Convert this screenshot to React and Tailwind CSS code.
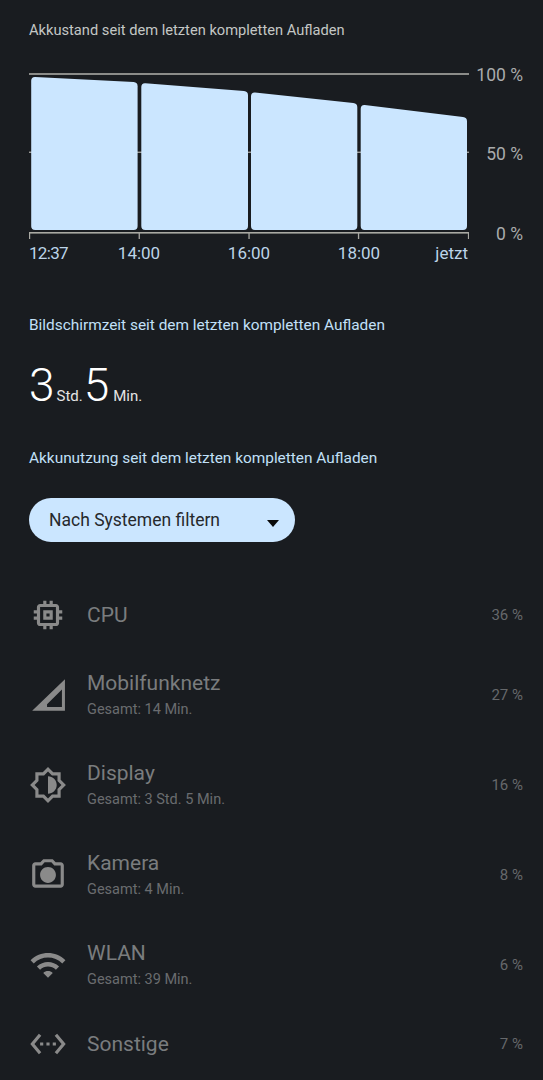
import React from "react";

const font = { fontFamily: '"Roboto", "Liberation Sans", sans-serif' };

const icons = {
  cpu: "M15 9H9v6h6V9zm-2 4h-2v-2h2v2zm8-2V9h-2V7c0-1.1-.9-2-2-2h-2V3h-2v2h-2V3H9v2H7c-1.1 0-2 .9-2 2v2H3v2h2v2H3v2h2v2c0 1.1.9 2 2 2h2v2h2v-2h2v2h2v-2h2c1.1 0 2-.9 2-2v-2h2v-2h-2v-2h2zm-4 6H7V7h10v10z",
  cell: "M2 22h20.7V2L2 22zm9.4-2.4h9.4V8.5L11.4 17.9z",
  display: "M20 15.31L23.31 12 20 8.69V4h-4.69L12 .69 8.69 4H4v4.69L.69 12 4 15.31V20h4.69L12 23.31 15.31 20H20v-4.69zM18 14.48V18h-3.52L12 20.48 9.52 18H6v-3.52L3.52 12 6 9.52V6h3.52L12 3.52 14.48 6H18v3.52L20.48 12 18 14.48zM12 6.5v11c3.03 0 5.5-2.47 5.5-5.5S15.03 6.5 12 6.5z",
  camera: "M20 4h-3.17L15 2H9L7.17 4H4c-1.1 0-2 .9-2 2v12c0 1.1.9 2 2 2h16c1.1 0 2-.9 2-2V6c0-1.1-.9-2-2-2zm0 14H4V6h4.05l1.83-2h4.24l1.83 2H20v12zM12 7c-2.76 0-5 2.24-5 5s2.24 5 5 5 5-2.24 5-5-2.24-5-5-5z",
  wifi: "M1 9l2 2c4.97-4.97 13.03-4.97 18 0l2-2C16.93 2.93 7.08 2.93 1 9zm8 8l3 3 3-3c-1.65-1.66-4.34-1.66-6 0zm-4-4l2 2c2.76-2.76 7.24-2.76 10 0l2-2C15.14 9.14 8.87 9.14 5 13z",
  other: "M7.77 6.76L6.23 5.48.82 12l5.41 6.52 1.54-1.28L3.42 12l4.35-5.24zM7 13h2v-2H7v2zm10-2h-2v2h2v-2zm-6 2h2v-2h-2v2zm6.77-7.52l-1.54 1.28L20.58 12l-4.35 5.24 1.54 1.28L23.18 12l-5.41-6.52z",
};

const rows = [
  { icon: "cpu", title: "CPU", pct: "36 %", h: "h-[70px]" },
  { icon: "cell", title: "Mobilfunknetz", sub: "Gesamt: 14 Min.", pct: "27 %", h: "h-[90px]" },
  { icon: "display", title: "Display", sub: "Gesamt: 3 Std. 5 Min.", pct: "16 %", h: "h-[90px]" },
  { icon: "camera", title: "Kamera", sub: "Gesamt: 4 Min.", pct: "8 %", h: "h-[90px]" },
  { icon: "wifi", title: "WLAN", sub: "Gesamt: 39 Min.", pct: "6 %", h: "h-[90px]" },
  { icon: "other", title: "Sonstige", pct: "7 %", h: "h-[68px]" },
];

function bar(x0, x1, yl, yr) {
  const b = 156;
  const r = 4;
  return `M${x0} ${yl + r}Q${x0} ${yl} ${x0 + r} ${yl + 0.2}L${x1 - r} ${yr - 0.3}Q${x1} ${yr} ${x1} ${yr + r}L${x1} ${b - r}Q${x1} ${b} ${x1 - r} ${b}L${x0 + r} ${b}Q${x0} ${b} ${x0} ${b - r}Z`;
}

function Chart() {
  const line = "#a9a9a3";
  const bars = [
    [2.2, 108.6, 2.7, 8.3],
    [112.3, 219, 9, 17.3],
    [222, 328.3, 18.3, 29.3],
    [331.7, 438, 30.7, 43.3],
  ];
  return (
    <svg width="440" height="167" viewBox="0 -1 440 167" className="block shrink-0">
      <rect x="0" y="-0.8" width="440" height="1.6" fill={line} />
      <rect x="0" y="158" width="440" height="1.6" fill={line} />
      {[0.5, 110.2, 220, 329.5, 439.5].map((x) => (
        <rect key={x} x={x - 0.6} y="158" width="1.3" height="7" fill={line} />
      ))}
      <rect x="0" y="77.6" width="440" height="1.3" fill={line} />
      {bars.map((b) => (
        <path key={b[0]} d={bar(b[0], b[1], b[2], b[3])} fill="#cbe6ff" />
      ))}
    </svg>
  );
}

function Row({ icon, title, sub, pct, h }) {
  return (
    <div className={`flex items-center ${h}`}>
      <div className="w-[38px] h-[38px] shrink-0">
        <svg width="38" height="38" viewBox="0 0 24 24" fill="#8a8a8a" fillRule="evenodd">
          <path d={icons[icon]} />
        </svg>
      </div>
      <div className="ml-[20px] flex-1 min-w-0">
        <div className="text-[21px] leading-[26px] text-[#7a7c7e]">{title}</div>
        {sub && <div className="text-[14.5px] leading-[20px] mt-[4px] text-[#6a6c6f]">{sub}</div>}
      </div>
      <div className="text-[15px] text-[#66686b]">{pct}</div>
    </div>
  );
}

export default function App() {
  return (
    <div style={font} className="w-[543px] h-[1080px] overflow-hidden bg-[#191c20] pl-[29px] pr-[20px]">
      <div className="pt-[20px] h-[73px] text-[14.66px] leading-[20px] text-[#c4c7c5]">
        Akkustand seit dem letzten kompletten Aufladen
      </div>

      <div className="flex">
        <Chart />
        <div className="flex-1 h-[179px] flex flex-col justify-between items-end text-[17.5px] leading-[20px] text-[#a9abac] -mt-[8px]">
          <span>100 %</span>
          <span className="-translate-y-[1px]">50 %</span>
          <span>0 %</span>
        </div>
      </div>

      <div className="w-[440px] grid grid-cols-[55px_110px_110px_110px_55px] text-[17px] leading-[20px] text-[#bcd4e8] -mt-[1px]">
        <span className="tracking-[-0.7px]">12:37</span>
        <span className="text-center">14:00</span>
        <span className="text-center">16:00</span>
        <span className="text-center">18:00</span>
        <span className="text-right pr-[1px]">jetzt</span>
      </div>

      <div className="mt-[52px] text-[15.4px] leading-[20px] text-[#c2e0f8]">
        Bildschirmzeit seit dem letzten kompletten Aufladen
      </div>

      <div className="mt-[24px] h-[52px] flex items-baseline text-white">
        <span className="text-[46px] leading-[52px] font-light">3</span>
        <span className="text-[15px] ml-[2px] mr-[1px] text-[#e4e4e4]">Std.</span>
        <span className="text-[46px] leading-[52px] font-light">5</span>
        <span className="text-[15px] ml-[4px] text-[#e4e4e4]">Min.</span>
      </div>

      <div className="mt-[37px] text-[15.4px] leading-[20px] text-[#c2e0f8]">
        Akkunutzung seit dem letzten kompletten Aufladen
      </div>

      <div className="mt-[30px] w-[266px] h-[44px] rounded-[22px] bg-[#cbe6ff] pl-[20px] pr-[16px] flex items-center justify-between">
        <span className="text-[17.5px] text-[#26292c]">Nach Systemen filtern</span>
        <svg width="12" height="7" viewBox="0 0 12 7" className="mt-[7px]">
          <path d="M0 0h12L6 7z" fill="#0a0a0a" />
        </svg>
      </div>

      <div className="mt-[38px]">
        {rows.map((r) => (
          <Row key={r.title} {...r} />
        ))}
      </div>
    </div>
  );
}
